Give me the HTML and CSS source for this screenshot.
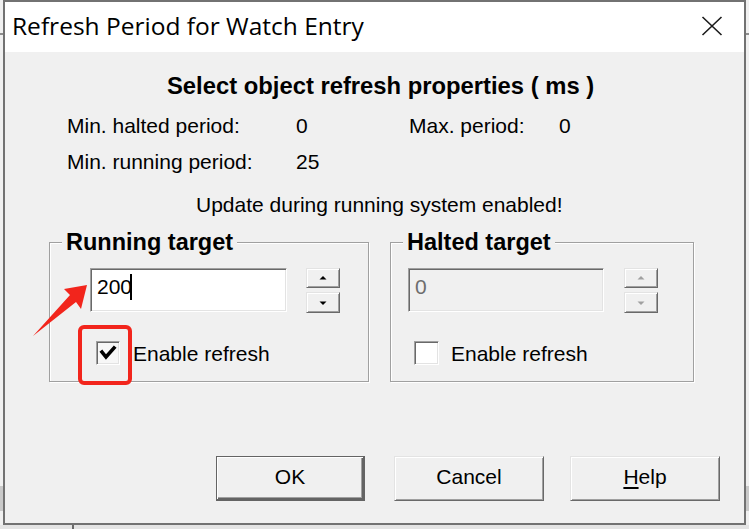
FILE: index.html
```html
<!DOCTYPE html>
<html lang="en">
<head>
<meta charset="utf-8">
<title>Refresh Period for Watch Entry</title>
<link rel="stylesheet" href="styles.css">
</head>
<body>
<div class="desk">
  <div class="window">
    <div class="titlebar">
      <span class="title">Refresh Period for Watch Entry</span>
      <svg class="close" width="22" height="20" viewBox="0 0 22 20" aria-label="Close">
        <path d="M1.5 1 L20.5 19 M20.5 1 L1.5 19" />
      </svg>
    </div>
    <div class="client">
      <div class="heading">Select object refresh properties ( ms )</div>
      <div class="info">
        <span>Min. halted period:</span><span>0</span><span>Max. period:</span><span>0</span>
        <span>Min. running period:</span><span>25</span><span></span><span></span>
      </div>
      <div class="notice">Update during running system enabled!</div>
      <div class="groups">
        <div class="group group-running">
          <div class="group-label">Running target</div>
          <div class="group-body">
            <div class="field-row">
              <div class="edit"><span class="edit-text">200</span><span class="caret"></span></div>
              <div class="spin">
                <div class="spin-btn"><svg width="8" height="4" viewBox="0 0 8 4"><path d="M0.5 3.5 L4 0 L7.5 3.5 Z"/></svg></div>
                <div class="spin-btn"><svg width="8" height="4" viewBox="0 0 8 4"><path d="M0.5 0.5 L7.5 0.5 L4 4 Z"/></svg></div>
              </div>
            </div>
            <div class="check-row">
              <span class="checkbox">
                <svg width="20" height="20" viewBox="0 0 20 20"><path d="M4 9 L8 14 L16 5" /></svg>
              </span>
              <span class="check-label">Enable refresh</span>
            </div>
          </div>
        </div>
        <div class="group group-halted">
          <div class="group-label">Halted target</div>
          <div class="group-body">
            <div class="field-row">
              <div class="edit disabled"><span class="edit-text">0</span></div>
              <div class="spin disabled">
                <div class="spin-btn"><svg width="8" height="4" viewBox="0 0 8 4"><path d="M0.5 3.5 L4 0 L7.5 3.5 Z"/></svg></div>
                <div class="spin-btn"><svg width="8" height="4" viewBox="0 0 8 4"><path d="M0.5 0.5 L7.5 0.5 L4 4 Z"/></svg></div>
              </div>
            </div>
            <div class="check-row">
              <span class="checkbox empty"></span>
              <span class="check-label">Enable refresh</span>
            </div>
          </div>
        </div>
      </div>
      <div class="buttons">
        <button class="btn btn-default">OK</button>
        <button class="btn btn-cancel">Cancel</button>
        <button class="btn btn-help"><u>H</u>elp</button>
      </div>
    </div>
  </div>
  <div class="under"><span class="under-gap"></span><span class="under-line"></span><span class="under-text">M</span></div>
  <svg class="annot" width="749" height="529" viewBox="0 0 749 529">
    <rect x="80" y="327" width="50" height="56" rx="4" ry="4" class="annot-box"/>
    <path class="annot-arrow" d="M87 285 L64 289 L70 295 L33 336 L76 302 L81 309 Z"/>
  </svg>
</div>
</body>
</html>
```
FILE: styles.css
```css
html, body {
  margin: 0;
  padding: 0;
}
body {
  font-family: "Liberation Sans", Arial, sans-serif;
  color: #000;
  background: #f0f0f0;
}
.desk {
  position: relative;
  width: 749px;
  height: 529px;
  overflow: hidden;
  background:
    linear-gradient(to bottom, transparent 33px, #8c8c8c 33px, #8c8c8c 35px, transparent 35px),
    linear-gradient(to bottom, transparent 486px, #c9c9c9 486px, #c9c9c9 511px, transparent 511px),
    #f0f0f0;
}
.window {
  box-sizing: border-box;
  margin-left: 3px;
  width: 743px;
  height: 525px;
  border: 2px solid #727272;
  display: flex;
  flex-direction: column;
  background: #f0f0f0;
}
.titlebar {
  height: 50px;
  flex: none;
  background: #fff;
  display: flex;
  align-items: center;
  justify-content: space-between;
  padding: 0 21px 0 7px;
}
.title {
  font-family: "Open Sans", "Noto Sans", sans-serif;
  font-size: 24.5px;
  line-height: 30px;
  color: #000;
  margin-top: -2px;
}
.close {
  display: block;
  margin-top: -2px;
}
.close path {
  stroke: #1b1b1b;
  stroke-width: 1.6;
  fill: none;
}
.client {
  flex: 1;
  display: flex;
  flex-direction: column;
  background: #f0f0f0;
}
.heading {
  margin-top: 22px;
  padding-left: 162px;
  font-weight: bold;
  font-size: 23.8px;
  line-height: 24px;
}
.info {
  margin-top: 16px;
  padding-left: 62px;
  display: grid;
  grid-template-columns: 229px 113px 150px auto;
  row-gap: 12px;
  font-size: 21px;
  line-height: 24px;
}
.notice {
  margin-top: 19px;
  padding-left: 191px;
  font-size: 21px;
  line-height: 24px;
}
.groups {
  display: flex;
  margin-top: 25px;
  padding-left: 44px;
  gap: 21px;
}
.group {
  box-sizing: border-box;
  height: 140px;
  border: 1px solid #a0a0a0;
  box-shadow: inset 1px 1px 0 #fff, 1px 1px 0 #fff;
}
.group-running {
  width: 320px;
}
.group-halted {
  width: 304px;
}
.group-label {
  width: fit-content;
  margin: -13px 0 0 12px;
  padding: 0 4px;
  background: #f0f0f0;
  font-weight: bold;
  font-size: 23.5px;
  line-height: 24px;
}
.group-body {
  padding-top: 14px;
}
.group-running .group-body {
  padding-left: 40px;
}
.group-halted .group-body {
  padding-left: 17px;
}
.field-row {
  display: flex;
  align-items: flex-start;
  gap: 19px;
}
.group-halted .field-row {
  gap: 20px;
}
.edit {
  box-sizing: border-box;
  width: 197px;
  height: 44px;
  border: 1px solid;
  border-color: #a0a0a0 #fff #fff #a0a0a0;
  box-shadow: inset 1px 1px 0 #696969, inset -1px -1px 0 #e3e3e3;
  background: #fff;
  display: flex;
  align-items: center;
  padding: 0 0 6px 6px;
  font-size: 21px;
  line-height: 24px;
}
.group-halted .edit {
  width: 196px;
}
.edit.disabled {
  background: #f0f0f0;
  color: #6d6d6d;
}
.caret {
  display: block;
  width: 2px;
  height: 26px;
  background: #000;
  margin-left: -2px;
}
.spin {
  display: flex;
  flex-direction: column;
  gap: 4px;
}
.spin-btn {
  box-sizing: border-box;
  width: 34px;
  height: 20px;
  border: 1px solid;
  border-color: #e3e3e3 #696969 #696969 #e3e3e3;
  box-shadow: inset 1px 1px 0 #fff, inset -1px -1px 0 #a0a0a0;
  background: #f0f0f0;
  display: flex;
  align-items: center;
  justify-content: center;
}
.spin-btn + .spin-btn {
  height: 21px;
}
.spin-btn svg {
  display: block;
}
.spin-btn path {
  fill: #000;
}
.spin.disabled path {
  fill: #a0a0a0;
}
.check-row {
  display: flex;
  align-items: center;
  height: 24px;
  margin-top: 28px;
  padding-left: 6px;
  font-size: 21px;
  line-height: 24px;
}
.checkbox {
  box-sizing: border-box;
  width: 24px;
  height: 24px;
  flex: none;
  border: 1px solid;
  border-color: #a0a0a0 #fff #fff #a0a0a0;
  box-shadow: inset 1px 1px 0 #696969, inset -1px -1px 0 #e3e3e3;
  background: #f7f7f7;
  display: flex;
  align-items: center;
  justify-content: center;
}
.checkbox.empty {
  width: 25px;
  background: #fff;
}
.checkbox svg {
  display: block;
}
.checkbox path {
  fill: none;
  stroke: #000;
  stroke-width: 3.6;
  stroke-linecap: square;
  stroke-linejoin: miter;
}
.check-label {
  margin-left: 13px;
  margin-top: 2px;
}
.group-halted .check-label {
  margin-left: 12px;
}
.buttons {
  display: flex;
  margin-top: 74px;
  padding-left: 211px;
}
.btn {
  box-sizing: border-box;
  width: 150px;
  height: 45px;
  margin: 0;
  padding: 0 0 3px 0;
  font-family: "Liberation Sans", Arial, sans-serif;
  font-size: 21px;
  line-height: 24px;
  color: #000;
  background: #f0f0f0;
  border: 1px solid;
  border-color: #e3e3e3 #696969 #696969 #e3e3e3;
  box-shadow: inset 1px 1px 0 #fff, inset -1px -1px 0 #a0a0a0;
  border-radius: 0;
}
.btn-default {
  width: 149px;
  border: 1px solid #646464;
  border-bottom-width: 2px;
  border-right-width: 2px;
  box-shadow: inset 1px 1px 0 #fff, inset -1px -1px 0 #646464, inset -2px -2px 0 #a0a0a0;
}
.btn-cancel {
  margin-left: 29px;
}
.btn-help {
  margin-left: 26px;
}
.btn u {
  text-decoration-thickness: 2px;
  text-underline-offset: 3px;
}
.under {
  display: flex;
  height: 4px;
  overflow: hidden;
  background: #e4e4e4;
}
.under-gap {
  width: 72px;
  flex: none;
}
.under-line {
  width: 2px;
  flex: none;
  background: #6a6a6a;
}
.under-text {
  margin-left: 13px;
  font-weight: bold;
  font-size: 20px;
  line-height: 20px;
  margin-top: 1px;
}
.annot {
  position: absolute;
  left: 0;
  top: 0;
  pointer-events: none;
}
.annot-box {
  fill: none;
  stroke: #f2251c;
  stroke-width: 4;
}
.annot-arrow {
  fill: #f2251c;
}
```
